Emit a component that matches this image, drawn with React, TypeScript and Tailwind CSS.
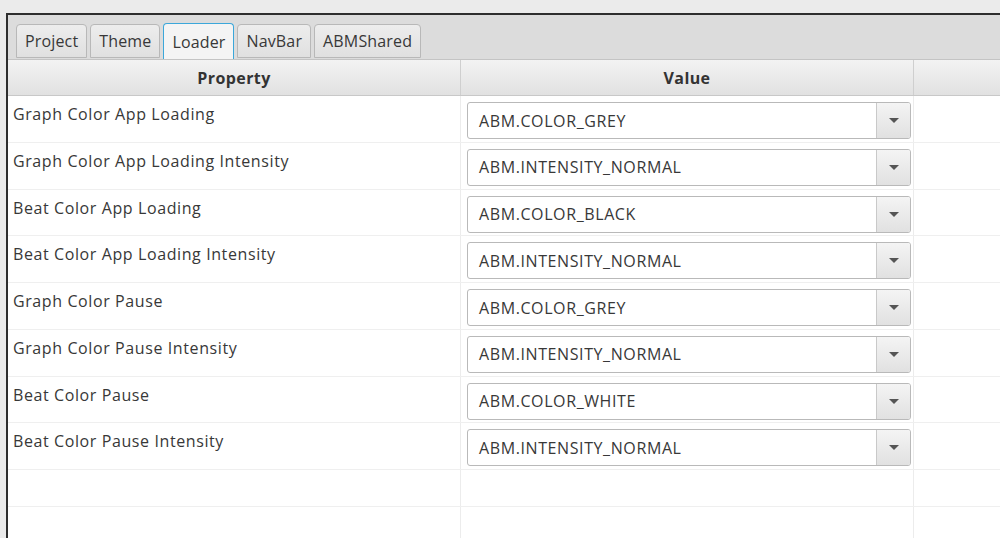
import React from "react";

const tabs = ["Project", "Theme", "Loader", "NavBar", "ABMShared"];

const rows = [
  { name: "Graph Color App Loading", value: "ABM.COLOR_GREY" },
  { name: "Graph Color App Loading Intensity", value: "ABM.INTENSITY_NORMAL" },
  { name: "Beat Color App Loading", value: "ABM.COLOR_BLACK" },
  { name: "Beat Color App Loading Intensity", value: "ABM.INTENSITY_NORMAL" },
  { name: "Graph Color Pause", value: "ABM.COLOR_GREY" },
  { name: "Graph Color Pause Intensity", value: "ABM.INTENSITY_NORMAL" },
  { name: "Beat Color Pause", value: "ABM.COLOR_WHITE" },
  { name: "Beat Color Pause Intensity", value: "ABM.INTENSITY_NORMAL" },
];

const ComboBox = ({ value }: { value: string }) => {
  return (
    <div className="mt-[6px] ml-[6px] w-[444px] h-[37px] flex rounded-[3px] border border-[#b9b9b9] bg-white overflow-hidden">
      <div className="flex-1 flex items-center pl-[11px] text-[16px] tracking-[0.6px] text-[#383838]">{value}</div>
      <div className="w-[34px] flex items-center justify-center border-l border-[#c9c9c9] bg-gradient-to-b from-[#f4f4f4] to-[#e1e1e1]">
        <svg width="10" height="5" viewBox="0 0 10 5">
          <path d="M0 0 L10 0 L5 5 Z" fill="#555" />
        </svg>
      </div>
    </div>
  );
};

const App = () => {
  return (
    <div className="w-[1000px] h-[538px] overflow-hidden bg-[#ebebeb] font-['Open_Sans',sans-serif]">
      <div className="h-[13px]" />
      <div className="ml-[6px] h-[525px] flex flex-col border-l-2 border-t-2 border-l-[#2e2e2e] border-t-[#2e2e2e]">
        {/* tab header */}
        <div className="shrink-0 h-[45px] flex items-end gap-[3px] pl-[8px] bg-[#dcdcdc] border-b border-[#c4c4c4]">
          {tabs.map((t) =>
            t === "Loader" ? (
              <div
                key={t}
                className="h-[36px] px-[8px] flex items-center rounded-t-[4px] border border-b-0 border-[#3ba7da] bg-[#f4f4f4] text-[16px] tracking-[0.15px] text-[#383838]"
              >
                {t}
              </div>
            ) : (
              <div
                key={t}
                className="h-[34px] mb-[1px] px-[8px] flex items-center rounded-t-[4px] border border-[#b8b8b8] bg-gradient-to-b from-[#ededed] to-[#e0e0e0] text-[16px] tracking-[0.15px] text-[#383838]"
              >
                {t}
              </div>
            )
          )}
        </div>

        {/* table */}
        <div className="flex-1 min-h-0 overflow-hidden bg-white">
          <div className="grid grid-cols-[453px_453px_1fr] h-[36px] bg-gradient-to-b from-[#f3f3f3] to-[#e1e1e1] border-b border-[#c8c8c8] text-[16px] font-bold tracking-[0.4px] text-[#333]">
            <div className="flex items-center justify-center border-r border-[#cfcfcf]">Property</div>
            <div className="flex items-center justify-center border-r border-[#cfcfcf]">Value</div>
            <div />
          </div>

          {rows.map((r) => (
            <div key={r.name} className="grid grid-cols-[453px_453px_1fr] h-[46.75px] border-b border-[#efefef]">
              <div className="pl-[5px] pt-[7px] text-[16px] leading-[22px] tracking-[0.6px] text-[#383838] border-r border-[#ececec]">
                {r.name}
              </div>
              <div className="border-r border-[#ececec]">
                <ComboBox value={r.value} />
              </div>
              <div />
            </div>
          ))}

          {[0, 1].map((i) => (
            <div key={i} className="grid grid-cols-[453px_453px_1fr] h-[37px] border-b border-[#efefef]">
              <div className="border-r border-[#ececec]" />
              <div className="border-r border-[#ececec]" />
              <div />
            </div>
          ))}
        </div>
      </div>
    </div>
  );
};

export default App;
